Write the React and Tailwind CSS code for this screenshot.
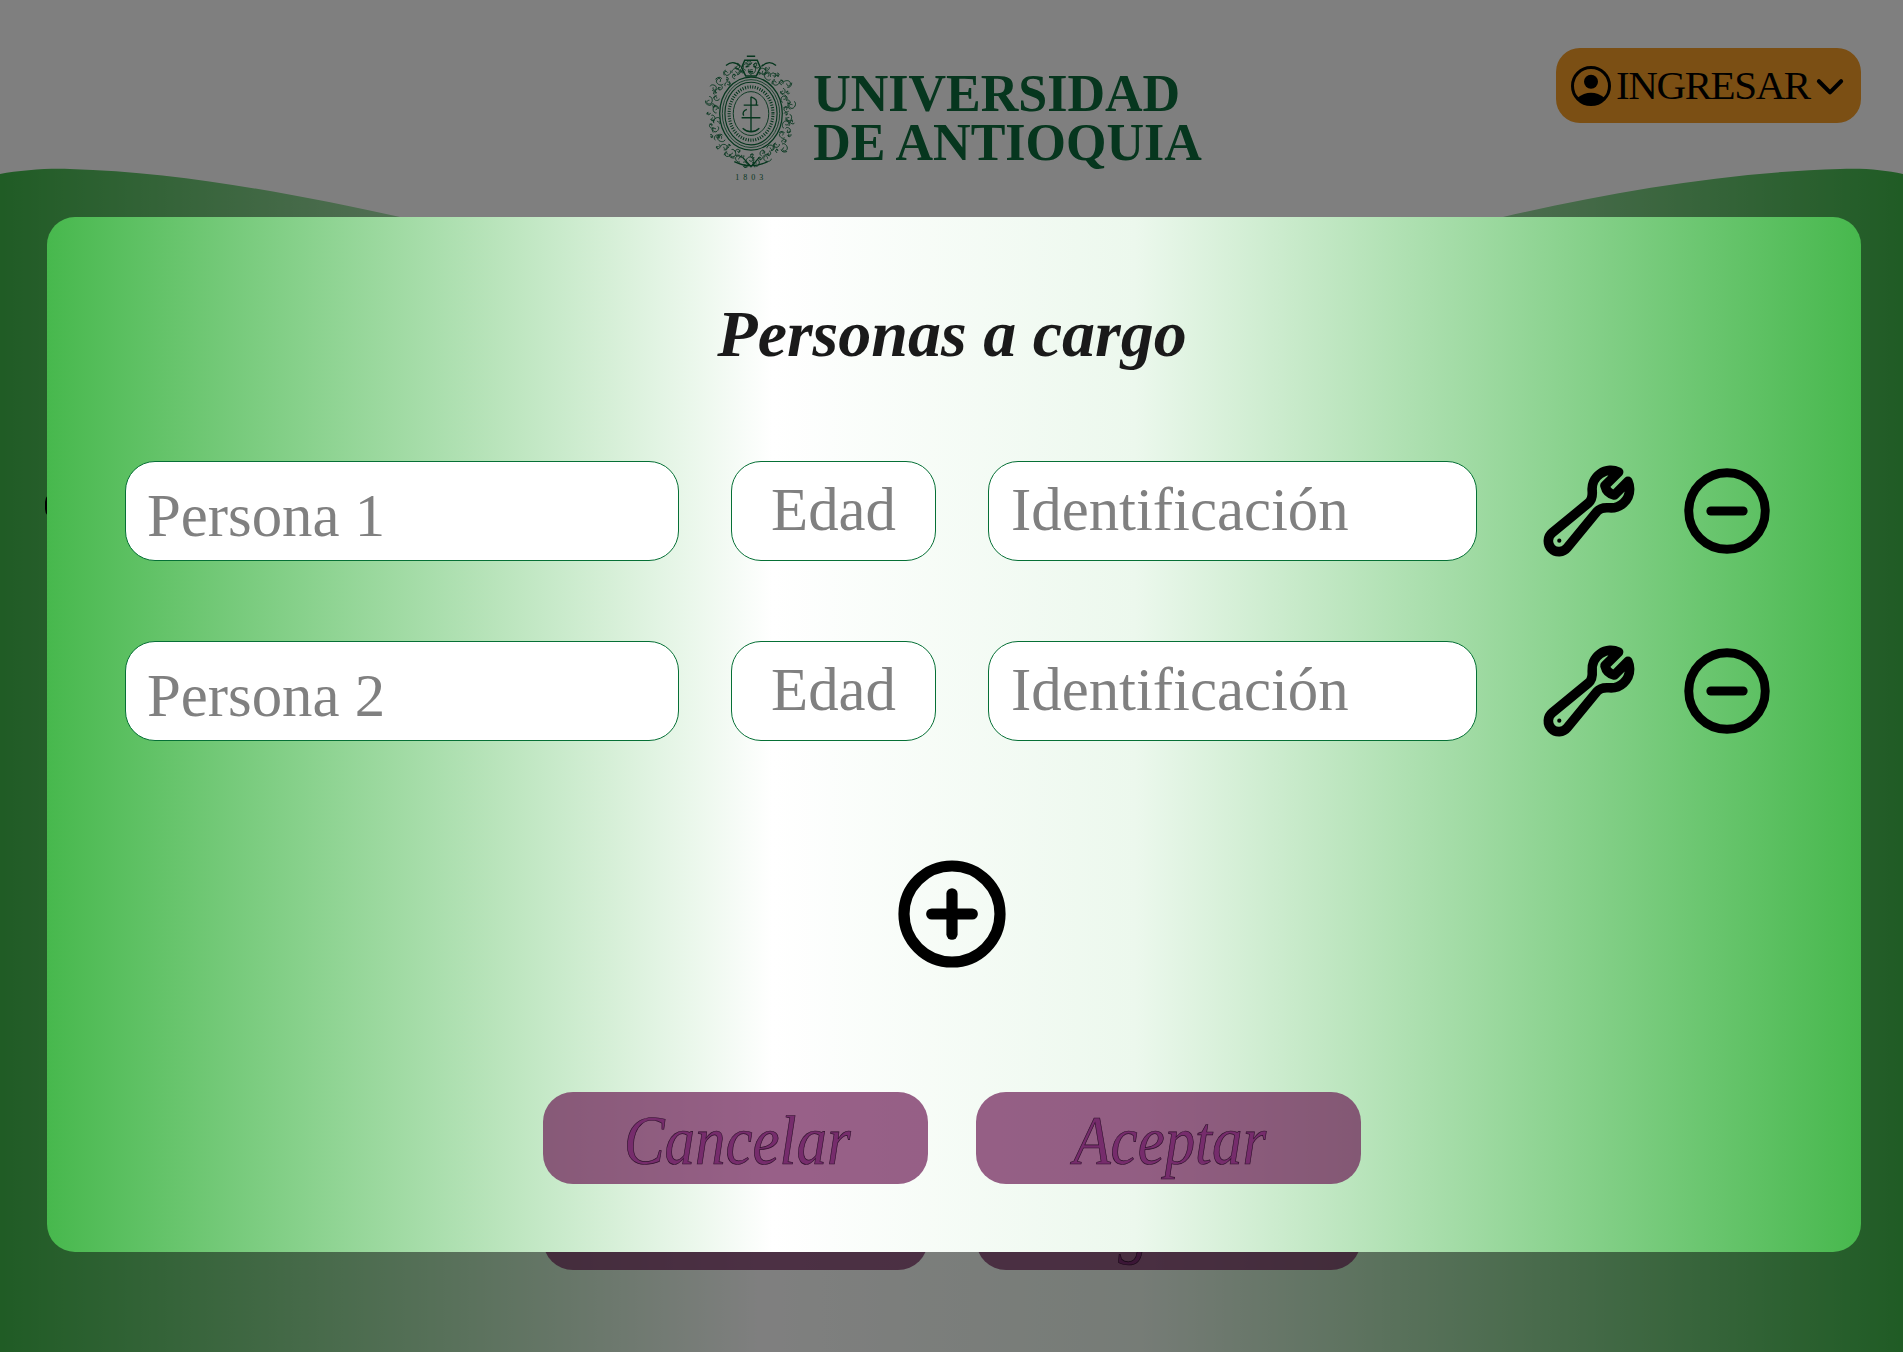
const rows = ['Persona 1', 'Persona 2'];

function Crest() {
  const center = { x: 46, y: 58 };
  const leaves = Array.from({ length: 70 }, (_, i) => {
    const a = (i / 70) * Math.PI * 2;
    const wob = ((i * 37) % 11) - 2;
    return {
      x: center.x + (35 + wob * 0.9) * Math.cos(a),
      y: center.y + (41 + wob) * Math.sin(a),
      r: 1.4 + ((i * 13) % 5) * 0.55,
      rot: (i * 97) % 360,
    };
  });

  return (
    <svg width="96" height="119" viewBox="0 0 92 114" fill="none" stroke="#0c6c3c" strokeWidth="0.8" className="shrink-0">
      {leaves.map((l, i) => (
        <g key={i} transform={`translate(${l.x} ${l.y}) rotate(${l.rot})`}>
          <path d={`M${-l.r} 0c0 ${-l.r} ${l.r * 2} ${-l.r} ${l.r * 2} 0s${-l.r} ${l.r} ${-l.r} 0`} />
          <path d={`M0 ${l.r}q${l.r} ${l.r * 0.4} ${l.r * 1.4} ${-l.r}`} />
        </g>
      ))}
      <ellipse cx="46" cy="58" rx="30" ry="35" fill="#ffffff" strokeWidth="1.2" />
      <ellipse cx="46" cy="58" rx="27.5" ry="32.5" strokeWidth="0.8" />
      <ellipse cx="46" cy="58" rx="25" ry="30" strokeWidth="1.1" />
      <ellipse cx="46" cy="58" rx="21" ry="25.5" strokeWidth="3" strokeDasharray="1 1.4" />
      <ellipse cx="46" cy="58" rx="17" ry="21" strokeWidth="0.9" />
      <path d="M46 42v33M39 50h14M38 72q8 7 16 0M37 62h18M46 42q7 2 5 8M42 54q-5 2 -3 6" strokeWidth="1.3" />
      <path d="M37 14l3 -7h12l3 7-4 8h-10zM41 13h2.500M48.500 13h2.500M44 18h4M42 3h8" strokeWidth="1.4" />
      <path d="M22 12q7 -6 14 1M56 13q7 -7 14 -1M30 104q16 8 32 0M38 100l8 9 8 -9" strokeWidth="1.3" />
    </svg>
  );
}

function UserIcon() {
  return (
    <svg width="40" height="40" viewBox="0 0 40 40" className="shrink-0">
      <circle cx="20" cy="20" r="18.5" fill="none" stroke="black" strokeWidth="3" />
      <circle cx="20" cy="15.7" r="7" fill="black" />
      <path d="M6 32Q20 21.5 34 32A18 18 0 0 1 6 32Z" fill="black" />
    </svg>
  );
}

function WrenchIcon() {
  return (
    <svg width="100" height="100" viewBox="0 0 24 24" fill="none" stroke="black" strokeWidth="2.3" strokeLinecap="round" strokeLinejoin="round" className="block shrink-0">
      <path d="M21.75 6.75a4.5 4.5 0 0 1-4.884 4.484c-1.076-.091-2.264.071-2.95.904l-7.152 8.684a2.548 2.548 0 1 1-3.586-3.586l8.684-7.152c.833-.686.995-1.874.904-2.95a4.5 4.5 0 0 1 6.336-4.486l-3.276 3.276a3.004 3.004 0 0 0 2.25 2.25l3.276-3.276c.256.565.398 1.192.398 1.836Z" />
      <path d="M4.867 19.125h.008v.008h-.008v-.008Z" strokeWidth="1" />
    </svg>
  );
}

function CircleIcon({ size, plus }) {
  return (
    <svg width={size} height={size} viewBox="0 0 24 24" fill="none" stroke="black" strokeWidth="2.1" strokeLinecap="round" className="block shrink-0">
      <circle cx="12" cy="12" r="9" />
      <path d="M8.2 12h7.6" />
      {plus && <path d="M12 8.2v7.6" />}
    </svg>
  );
}

function ActionButton({ children }) {
  return (
    <button className="flex h-[92px] w-[385px] items-center justify-center rounded-[30px] bg-[#6c1c56]/70 pt-[4px] pl-[3px] text-[70px] text-[#762c6c] italic [-webkit-text-stroke:0.7px_#2d0f2a]">
      <span className="inline-block scale-x-[0.87]">{children}</span>
    </button>
  );
}

const inputClass =
  "h-[100px] rounded-[30px] border border-[#067036] bg-white text-[60.8px] text-black outline-none placeholder:text-[#808080]";

export default function App() {
  return (
    <div className="relative h-[1352px] overflow-hidden bg-white font-['Liberation_Serif',serif]">
      <svg className="absolute inset-0" width="1903" height="1352" viewBox="0 0 1903 1352">
        <defs>
          <linearGradient id="wave" x1="0" y1="0" x2="1" y2="0">
            <stop offset="0" stopColor="#40b84a" />
            <stop offset="0.4" stopColor="#ffffff" />
            <stop offset="0.6" stopColor="#ecf8ed" />
            <stop offset="1" stopColor="#40b84a" />
          </linearGradient>
        </defs>
        <path
          d="M0 174C20 170 50 168 70 169C180 172 300 195 400 217Q951 340 1503 217C1610 192 1730 172 1840 169C1865 168 1885 170 1903 174V1352H0Z"
          fill="url(#wave)"
        />
      </svg>

      {/* page behind the dialog */}
      <div className="relative flex h-full flex-col">
        <header className="relative flex h-[190px] justify-center pt-[53px]">
          <div className="flex items-start gap-[14px] pl-[2px]">
            <div className="flex flex-col items-center">
              <Crest />
              <span className="mt-px text-[8px] leading-[10px] tracking-[4px] text-[#0c6c3c]">1803</span>
            </div>
            <div className="pt-[16px] text-[52px] leading-[49px] font-bold whitespace-nowrap text-[#0c6c3c]">
              <div>UNIVERSIDAD</div>
              <div>DE ANTIOQUIA</div>
            </div>
          </div>
          <button className="absolute top-[48px] right-[42px] flex h-[75px] w-[305px] items-center rounded-[24px] bg-[#f69e28] pl-[15px] text-[41px] tracking-[-1.4px] text-black">
            <UserIcon />
            <span className="ml-[5px]">INGRESAR</span>
            <svg width="38" height="38" viewBox="0 0 24 24" fill="none" stroke="black" strokeWidth="2.6" strokeLinecap="round" strokeLinejoin="round" className="ml-px">
              <path d="m5 9 7 7 7-7" />
            </svg>
          </button>
        </header>
        <div className="mt-auto mb-[82px] flex justify-center gap-[48px]">
          <ActionButton>Anterior</ActionButton>
          <ActionButton>Registrar</ActionButton>
        </div>
      </div>

      {/* dialog backdrop */}
      <div className="absolute inset-0 bg-black/50" />
      <div className="absolute top-[492px] left-[45px] h-[27px] w-[20px] rounded-full bg-black" />

      {/* dialog */}
      <div className="absolute top-[217px] left-[47px] flex h-[1035px] w-[1814px] flex-col rounded-[28px] bg-[linear-gradient(90deg,#47b84d,#ffffff_40%,#ecf8ed_60%,#47b84d)] pt-[60px] pl-[78px]">
        <h2 className="-ml-[82px] h-[184px] text-center text-[66px] leading-[114px] font-bold text-[#1a1a1a] italic">
          Personas a cargo
        </h2>
        <div className="flex flex-col gap-[80px]">
          {rows.map((name) => (
            <div key={name} className="flex h-[100px] items-center">
              <input placeholder={name} className={inputClass + ' w-[554px] pt-[10px] pl-[21px]'} />
              <input placeholder="Edad" className={inputClass + ' ml-[52px] w-[205px] pb-[2px] text-center'} />
              <input placeholder="Identificación" className={inputClass + ' ml-[52px] w-[489px] pb-[2px] pl-[22px]'} />
              <span className="ml-[62px]">
                <WrenchIcon />
              </span>
              <span className="ml-[37px]">
                <CircleIcon size={102} />
              </span>
            </div>
          ))}
        </div>
        <div className="mt-[109px] -ml-[82px] flex justify-center">
          <CircleIcon size={128} plus />
        </div>
        <div className="mt-[114px] -ml-[82px] flex justify-center gap-[48px]">
          <ActionButton>Cancelar</ActionButton>
          <ActionButton>Aceptar</ActionButton>
        </div>
      </div>
    </div>
  );
}
